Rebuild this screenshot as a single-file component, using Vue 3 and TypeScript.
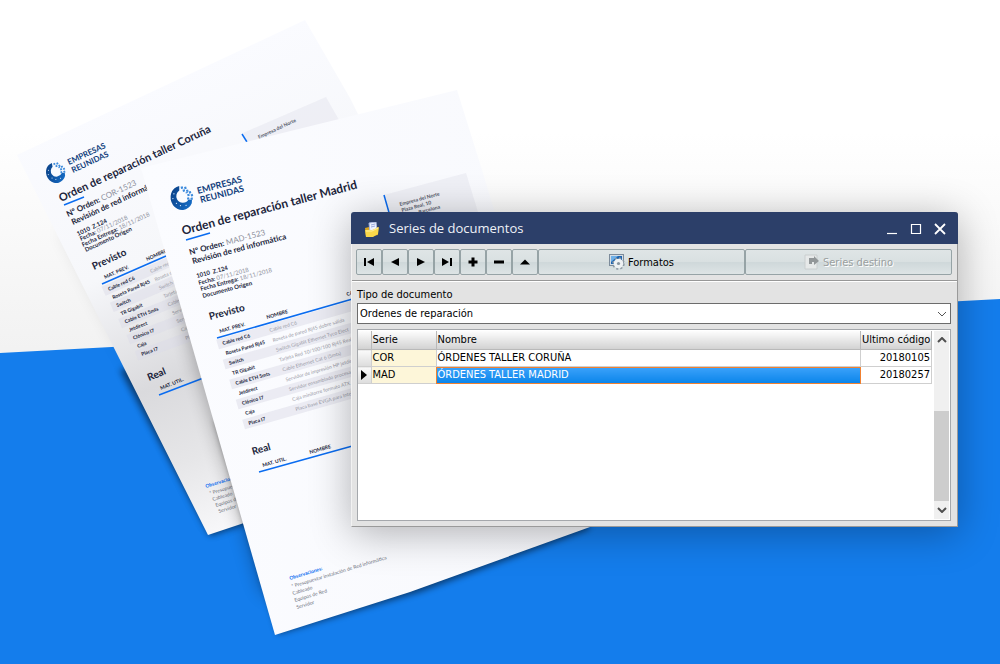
<script setup lang="ts">
import { ref } from 'vue'

interface Line { x: number; y: number; text: string; value?: string }
interface Item { name: string; detail: string }
interface Pt { x: number; y: number }
interface Sheet {
  key: string
  outline: string
  fill: string
  angle: number
  logo: Pt
  logoScale: number
  brandSize: number
  brand: Line[]
  title: Line
  titleSize: number
  rule: string
  leadSize: number
  lead: Line[]
  meta: Line[]
  address: { box: string; bar: string; lines: Line[] }
  planned: { heading: Line; columns: Line[]; rule: string; first: Pt; last: Pt; detailFirst: Pt; detailLast: Pt; angles: [number, number] }
  real: { angle: number; heading: Line; columns: Line[]; rule: string }
  notes: { angle: number; lines: Line[] }
}

const items: Item[] = [
  { name: 'Cable red C6', detail: 'Cable red C6' },
  { name: 'Roseta Pared Rj45', detail: 'Roseta de pared Rj45 dobre salida' },
  { name: 'Switch', detail: 'Switch Gigabit Ethernet Tyco Elect' },
  { name: 'TR Gigabit', detail: 'Tarjeta Red 10/100/100 Rj45 Realtek' },
  { name: 'Cable ETH 5mts', detail: 'Cable Ethernet Cat 6 (5mts)' },
  { name: 'Jetdirect', detail: 'Servidor de impresión HP jetdirect' },
  { name: 'Clónico I7', detail: 'Servidor ensamblado procesador' },
  { name: 'Caja', detail: 'Caja minitorre formato ATX' },
  { name: 'Placa I7', detail: 'Placa base EVGA para Intel' },
]

const sheets: Sheet[] = [
  {
    key: 'coruna',
    outline: '17,155 305,20 350,98 520,440 250,521 208,535',
    fill: 'url(#sheetBack)',
    angle: -25,
    logo: { x: 55, y: 172 },
    logoScale: 0.95,
    brandSize: 8,
    brand: [{ x: 69, y: 165, text: 'EMPRESAS' }, { x: 73, y: 173, text: 'REUNIDAS' }],
    title: { x: 61, y: 202, text: 'Orden de reparación taller Coruña' },
    titleSize: 11,
    rule: 'M64 205 L84 197',
    leadSize: 8,
    lead: [{ x: 68, y: 217, text: 'Nº Orden:', value: 'COR-1523' }, { x: 73, y: 225, text: 'Revisión de red informática' }],
    meta: [
      { x: 78, y: 236, text: '1010  Z.124' },
      { x: 81, y: 241, text: 'Fecha:', value: '07/11/2018' },
      { x: 83, y: 247, text: 'Fecha Entrega:', value: '18/11/2018' },
      { x: 86, y: 252, text: 'Documento Origen' },
    ],
    address: {
      box: '243,133 326,97 339,120 248,143',
      bar: 'M242 134 L247 142',
      lines: [{ x: 259, y: 139, text: 'Empresa del Norte' }],
    },
    planned: {
      heading: { x: 94, y: 270, text: 'Previsto' },
      columns: [{ x: 105, y: 279, text: 'MAT. PREV.' }, { x: 147, y: 261, text: 'NOMBRE' }],
      rule: 'M102 284 L166 256',
      first: { x: 109, y: 291 },
      last: { x: 142, y: 356 },
      detailFirst: { x: 151, y: 273 },
      detailLast: { x: 186, y: 340 },
      angles: [-24, -20],
    },
    real: {
      angle: -22,
      heading: { x: 149, y: 381, text: 'Real' },
      columns: [{ x: 161, y: 390, text: 'MAT. UTIL.' }],
      rule: 'M159 395 L206 377',
    },
    notes: {
      angle: -17,
      lines: [
        { x: 206, y: 488, text: 'Observaciones:' },
        { x: 210, y: 495, text: '* Presupuestar' },
        { x: 213, y: 501, text: 'Cableado' },
        { x: 216, y: 507, text: 'Equipos de Red' },
        { x: 219, y: 513, text: 'Servidor' },
      ],
    },
  },
  {
    key: 'madrid',
    outline: '141,168 457,90 482,170 590,527 410,592 275,635',
    fill: 'url(#sheetFront)',
    angle: -15,
    logo: { x: 181, y: 197 },
    logoScale: 1.1,
    brandSize: 9,
    brand: [{ x: 198, y: 194, text: 'EMPRESAS' }, { x: 201, y: 203, text: 'REUNIDAS' }],
    title: { x: 183, y: 235, text: 'Orden de reparación taller Madrid' },
    titleSize: 12,
    rule: 'M186 240 L210 233',
    leadSize: 8,
    lead: [{ x: 190, y: 255, text: 'Nº Orden:', value: 'MAD-1523' }, { x: 193, y: 264, text: 'Revisión de red informática' }],
    meta: [
      { x: 197, y: 278, text: '1010  Z.124' },
      { x: 199, y: 285, text: 'Fecha:', value: '07/11/2018' },
      { x: 201, y: 291, text: 'Fecha Entrega:', value: '18/11/2018' },
      { x: 203, y: 298, text: 'Documento Origen' },
    ],
    address: {
      box: '384,195 466,173 482,225 392,225',
      bar: 'M384 195 L390 216',
      lines: [
        { x: 400, y: 206, text: 'Empresa del Norte' },
        { x: 402, y: 212, text: 'Plaza Real, 10' },
        { x: 419, y: 214, text: 'Barcelona' },
      ],
    },
    planned: {
      heading: { x: 210, y: 320, text: 'Previsto' },
      columns: [{ x: 220, y: 333, text: 'MAT. PREV.' }, { x: 267, y: 319, text: 'NOMBRE' }, { x: 347, y: 296, text: 'CANT.' }],
      rule: 'M217 338 L356 298',
      first: { x: 223, y: 345 },
      last: { x: 249, y: 425 },
      detailFirst: { x: 270, y: 332 },
      detailLast: { x: 296, y: 411 },
      angles: [-16, -16],
    },
    real: {
      angle: -16,
      heading: { x: 253, y: 455, text: 'Real' },
      columns: [{ x: 263, y: 467, text: 'MAT. UTIL.' }, { x: 310, y: 454, text: 'NOMBRE' }],
      rule: 'M259 472 L356 445',
    },
    notes: {
      angle: -17,
      lines: [
        { x: 290, y: 580, text: 'Observaciones:' },
        { x: 292, y: 588, text: '* Presupuestar instalación de Red informática' },
        { x: 293, y: 595, text: 'Cableado' },
        { x: 295, y: 602, text: 'Equipos de Red' },
        { x: 297, y: 609, text: 'Servidor' },
      ],
    },
  },
]

const place = (p: Pt, angle: number): string => `translate(${p.x} ${p.y}) rotate(${angle})`

const between = (a: Pt, b: Pt, i: number): Pt => {
  const t = i / (items.length - 1)
  return { x: a.x + (b.x - a.x) * t, y: a.y + (b.y - a.y) * t }
}

const rowAngle = (range: [number, number], i: number): number =>
  range[0] + ((range[1] - range[0]) * i) / (items.length - 1)

const navigation = [
  { label: 'Primero', path: 'M2 3h2v8h-2z M12 3v8l-7-4z' },
  { label: 'Anterior', path: 'M11 3v8l-8-4z' },
  { label: 'Siguiente', path: 'M3 3v8l8-4z' },
  { label: 'Último', path: 'M10 3h2v8h-2z M2 3v8l7-4z' },
  { label: 'Añadir', path: 'M5.500 2.500h3v3h3v3h-3v3h-3v-3h-3v-3h3z' },
  { label: 'Eliminar', path: 'M2 5.500h10v3h-10z' },
  { label: 'Editar', path: 'M2 9.500h10l-5-5z' },
]

const docType = ref('Ordenes de reparación')
const selected = ref('MAD')
const series = [
  { code: 'COR', name: 'ÓRDENES TALLER CORUÑA', last: '20180105' },
  { code: 'MAD', name: 'ÓRDENES TALLER MADRID', last: '20180257' },
]
</script>

<template>
  <main class="stage">
    <svg class="scene" viewBox="0 0 1000 664" preserveAspectRatio="xMinYMin slice" role="img" aria-label="Órdenes de reparación impresas">
      <defs>
        <linearGradient id="wall" x1="0" y1="0" x2="0" y2="1">
          <stop offset="0.2" stop-color="#ffffff" />
          <stop offset="0.55" stop-color="#f1f1f1" />
        </linearGradient>
        <linearGradient id="sheetBack" gradientUnits="userSpaceOnUse" x1="140" y1="90" x2="320" y2="500">
          <stop offset="0" stop-color="#fafbff" />
          <stop offset="0.35" stop-color="#f6f7fa" />
          <stop offset="0.62" stop-color="#dadadd" />
          <stop offset="0.8" stop-color="#e6e6e8" />
          <stop offset="1" stop-color="#fafafc" />
        </linearGradient>
        <linearGradient id="sheetFront" x1="0" y1="0" x2="1" y2="0">
          <stop offset="0" stop-color="#fbfcff" />
          <stop offset="1" stop-color="#f8f9fd" />
        </linearGradient>
        <linearGradient id="brandBlue" x1="0" y1="0" x2="1" y2="1">
          <stop offset="0" stop-color="#0a3d80" />
          <stop offset="1" stop-color="#1670cc" />
        </linearGradient>
        <filter id="soft" x="-30%" y="-30%" width="160%" height="160%">
          <feGaussianBlur stdDeviation="9" />
        </filter>
        <filter id="tight" x="-30%" y="-30%" width="160%" height="160%">
          <feGaussianBlur stdDeviation="3" />
        </filter>
        <g id="brandMark">
          <path d="M1 -10 A10 11 0 1 0 8 8 L9 5 L6 4 A6 6 0 0 1 -4 1 A6 6 0 0 1 0 -6z" fill="url(#brandBlue)" />
          <path d="M-6 -5h1v1h-1z M-8 -1h1v1h-1z M-6 4h1v1h-1z M-3 7h1v1h-1z M2 8h1v1h-1z" fill="#d7e8fa" />
          <path d="M2 -9h2v2h-2z M5 -8h2v2h-2z M3 -6h2v2h-2z M6 -5h2v2h-2z M8 -3h2v2h-2z M5 -3h2v1h-2z M9 0h2v2h-2z M6 -1h2v2h-2z M8 3h2v2h-2z M5 2h2v2h-2z" fill="#3d8bdc" />
        </g>
      </defs>

      <rect width="1000" height="664" fill="url(#wall)" />
      <path d="M0 353 L1000 299 V664 H0z" fill="#147dec" />

      <template v-for="sheet in sheets" :key="sheet.key">
        <template v-if="sheet.key === 'madrid'">
          <polygon points="175,290 440,240 560,500 280,600 262,590" class="shade deep" filter="url(#soft)" />
          <polygon points="215,420 500,400 590,529 420,592 278,634" class="shade dark" filter="url(#tight)" />
        </template>
        <template v-else>
          <polygon points="60,230 300,200 400,420 214,530" class="shade faint" filter="url(#soft)" />
          <polygon points="120,370 300,320 300,505 210,536" class="shade dark" filter="url(#tight)" />
        </template>
        <polygon :points="sheet.outline" :fill="sheet.fill" />

        <polygon :points="sheet.address.box" class="band address" />
        <path :d="sheet.address.bar" class="rule" />
        <text v-for="l in sheet.address.lines" :key="l.text" class="cell soft" :transform="place(l, sheet.angle)">{{ l.text }}</text>

        <use href="#brandMark" :transform="`translate(${sheet.logo.x} ${sheet.logo.y}) rotate(${sheet.angle}) scale(${sheet.logoScale})`" />
        <text v-for="l in sheet.brand" :key="l.text" class="brand" :font-size="sheet.brandSize" :transform="place(l, sheet.angle)">{{ l.text }}</text>

        <text class="title" :font-size="sheet.titleSize" :transform="place(sheet.title, sheet.angle)">{{ sheet.title.text }}</text>
        <path :d="sheet.rule" class="rule" />
        <text v-for="l in sheet.lead" :key="l.text" class="lead" :font-size="sheet.leadSize" :transform="place(l, sheet.angle)">{{ l.text }}<tspan v-if="l.value" class="value">{{ ' ' + l.value }}</tspan></text>
        <text v-for="l in sheet.meta" :key="l.text" class="meta" :transform="place(l, sheet.angle)">{{ l.text }}<tspan v-if="l.value" class="value">{{ ' ' + l.value }}</tspan></text>

        <text class="heading" :transform="place(sheet.planned.heading, sheet.angle)">{{ sheet.planned.heading.text }}</text>
        <text v-for="l in sheet.planned.columns" :key="l.text" class="cell" :transform="place(l, sheet.planned.angles[0])">{{ l.text }}</text>
        <path :d="sheet.planned.rule" class="rule" />
        <g v-for="(item, i) in items" :key="item.name">
          <rect v-if="i % 2 === 0" x="-5" y="-7" width="150" height="10" class="band" :transform="place(between(sheet.planned.first, sheet.planned.last, i), rowAngle(sheet.planned.angles, i))" />
          <text class="cell" :transform="place(between(sheet.planned.first, sheet.planned.last, i), rowAngle(sheet.planned.angles, i))">{{ item.name }}</text>
          <text class="detail" :transform="place(between(sheet.planned.detailFirst, sheet.planned.detailLast, i), rowAngle(sheet.planned.angles, i))">{{ item.detail }}</text>
        </g>

        <text class="heading" :transform="place(sheet.real.heading, sheet.real.angle)">{{ sheet.real.heading.text }}</text>
        <text v-for="l in sheet.real.columns" :key="l.text" class="cell" :transform="place(l, sheet.real.angle)">{{ l.text }}</text>
        <path :d="sheet.real.rule" class="rule" />

        <text v-for="(l, i) in sheet.notes.lines" :key="l.text" :class="i === 0 ? 'note-head' : 'note'" :transform="place(l, sheet.notes.angle)">{{ l.text }}</text>
      </template>
    </svg>

    <section class="window" aria-labelledby="window-title">
      <header class="titlebar">
        <svg class="folder" viewBox="0 0 16 16" aria-hidden="true">
          <path d="M1 6l4-1 1 1 8-1v8l-12 2z" fill="#d9a520" />
          <path d="M5 1l7-1 1 9-7 2z" fill="#eef3ff" stroke="#aab6dc" />
          <path d="M7 3l4-1M7 5l4-1" stroke="#9aa8dd" fill="none" />
          <path d="M1 8l7 0 7-3-1 7-5 3-7 0z" fill="#fbd84a" />
          <path d="M2 9l6 0 6-3" stroke="#fff0a0" fill="none" />
        </svg>
        <h1 id="window-title">Series de documentos</h1>
        <button type="button" class="caption" aria-label="Minimizar"><svg viewBox="0 0 12 12"><path d="M1 10.500h10" /></svg></button>
        <button type="button" class="caption" aria-label="Maximizar"><svg viewBox="0 0 12 12"><path d="M1.500 1.500h9v9h-9z" /></svg></button>
        <button type="button" class="caption" aria-label="Cerrar"><svg viewBox="0 0 12 12"><path d="M1 1l10 10M11 1L1 11" stroke-width="1.800" /></svg></button>
      </header>

      <div class="toolbar">
        <button v-for="n in navigation" :key="n.label" type="button" class="tool" :aria-label="n.label">
          <svg viewBox="0 0 14 14"><path :d="n.path" /></svg>
        </button>
        <button type="button" class="tool wide">
          <svg class="glyph" viewBox="0 0 16 16" aria-hidden="true">
            <rect x="0.500" y="0.500" width="14" height="11" fill="#d5dde5" stroke="#7c8b9b" />
            <rect x="2" y="2" width="11" height="8" fill="#1d63ae" />
            <path d="M2 2h7l-7 6z" fill="#6fb0e8" />
            <circle cx="9.500" cy="9.500" r="5" fill="none" stroke="#8e99a3" stroke-dasharray="2 1.900" stroke-width="2.500" />
            <circle cx="9.500" cy="9.500" r="4.800" fill="#eef1f3" />
            <circle cx="9.500" cy="9.500" r="1.600" fill="#8895a1" />
          </svg>
          Formatos
        </button>
        <button type="button" class="tool wide" disabled>
          <svg class="glyph" viewBox="0 0 16 16" aria-hidden="true">
            <path d="M1 1h12v14h-12z" fill="#e6e9e9" stroke="#c9cecf" />
            <path d="M5 4h5v-2l5 5-5 4v-3h-2v2h-3z" fill="#929799" />
          </svg>
          Series destino
        </button>
      </div>

      <div class="body">
        <label for="doc-type">Tipo de documento</label>
        <div class="combo">
          <select id="doc-type" v-model="docType">
            <option>Ordenes de reparación</option>
          </select>
          <svg viewBox="0 0 10 6" aria-hidden="true"><path d="M1 1l4 4 4-4" /></svg>
        </div>

        <div class="grid">
          <div class="rows">
            <table>
              <colgroup><col class="c-mark" /><col class="c-code" /><col /><col class="c-last" /></colgroup>
              <thead>
                <tr><th aria-label="Selección"></th><th>Serie</th><th>Nombre</th><th class="num">Ultimo código</th></tr>
              </thead>
              <tbody>
                <tr v-for="s in series" :key="s.code" @click="selected = s.code">
                  <td class="mark"><svg v-if="s.code === selected" viewBox="0 0 6 10"><path d="M0 0v10l6-5z" /></svg></td>
                  <td class="code">{{ s.code }}</td>
                  <td :class="{ active: s.code === selected }">{{ s.name }}</td>
                  <td class="num">{{ s.last }}</td>
                </tr>
              </tbody>
            </table>
          </div>
          <div class="scroll">
            <button type="button" aria-label="Subir"><svg viewBox="0 0 10 6"><path d="M1 5l4-4 4 4" /></svg></button>
            <div class="track"><div class="thumb"></div></div>
            <button type="button" aria-label="Bajar"><svg viewBox="0 0 10 6"><path d="M1 1l4 4 4-4" /></svg></button>
          </div>
        </div>
      </div>
    </section>
  </main>
</template>

<style>
body { margin: 0; }
</style>

<style scoped>
.stage {
  position: relative;
  box-sizing: border-box;
  min-height: 100vh;
  padding: 212px 4.2% 24px 35.1%;
  overflow: hidden;
  background: #147dec;
}
.scene { position: absolute; inset: 0; width: 100%; height: 100%; font-family: Lato, "Open Sans", sans-serif; }
.scene text { white-space: pre; fill: #20243a; }
.shade { fill: #000; }
.shade.deep { opacity: 0.3; }
.shade.dark { opacity: 0.5; }
.shade.faint { opacity: 0.1; }
.band { fill: #dcdce8; fill-opacity: 0.5; }
.band.address { fill-opacity: 0.35; }
.rule { stroke: #0a6cf0; stroke-width: 1.5; fill: none; }
.scene .brand { fill: #123f7c; font-weight: 700; }
.title { font-weight: 700; }
.heading { font-size: 10px; font-weight: 700; }
.lead { font-weight: 700; }
.meta { font-size: 6px; font-weight: 700; }
.scene .value { fill: #8d909c; font-weight: 400; }
.cell { font-size: 5px; font-weight: 700; }
.scene .soft { fill: #555a6b; }
.scene .detail { font-size: 5px; fill: #9a9ca8; }
.scene .note-head { font-size: 5px; font-weight: 700; fill: #0a6cf0; }
.scene .note { font-size: 5px; fill: #70747f; }

.window {
  position: relative;
  box-sizing: border-box;
  border: 1px solid #9a9a9a;
  border-top: 0;
  border-left-color: #f2f2f2;
  border-radius: 3px 3px 0 0;
  background: #e3e3e3;
  box-shadow: 0 6px 40px rgba(0, 0, 0, 0.3);
  font-family: "DejaVu Sans Condensed", "DejaVu Sans", sans-serif;
  font-size: 11px;
  color: #000;
}
.titlebar {
  display: flex;
  align-items: center;
  height: 32px;
  margin: 0 -1px;
  padding: 0 12px;
  box-sizing: border-box;
  border-radius: 3px 3px 0 0;
  background: #2c3f69;
}
.folder { width: 16px; height: 16px; margin: 4px 9px 0 1px; }
h1 { flex: 1; margin: 0; font: 400 13px/20px "Open Sans", "Noto Sans", sans-serif; color: #eef1f7; }
.caption { width: 24px; height: 24px; padding: 0; border: 0; background: none; }
.caption:last-child { margin-right: -6px; }
.caption svg { display: block; width: 12px; height: 12px; margin: 2px auto 0; fill: none; stroke: #fff; stroke-width: 1.2; }

.toolbar {
  display: flex;
  box-sizing: border-box;
  height: 37px;
  padding: 5px 5px 5px 4px;
  border-bottom: 1px solid #979797;
  box-shadow: 0 1px #fff;
}
.tool {
  display: flex;
  flex: none;
  align-items: center;
  justify-content: center;
  gap: 3px;
  width: 26px;
  padding: 0;
  border: 1px solid #96a3a6;
  border-radius: 2px;
  background: linear-gradient(#dfe5e6, #d9e0e1 48%, #cfd8da 52%, #dde4e5);
  font: inherit;
  color: #000;
}
.tool.wide { flex: 1; width: auto; }
.tool svg { width: 14px; height: 14px; }
.tool .glyph { width: 16px; height: 16px; }
.tool:disabled { color: #9a9f9f; text-shadow: 1px 1px #fff; }

.body { padding: 6px 6px 5px 5px; }
label { display: block; height: 16px; line-height: 16px; }
.combo { position: relative; height: 21px; }
select {
  box-sizing: border-box;
  width: 100%;
  height: 21px;
  padding: 0 2px;
  border: 1px solid #6c6c6c;
  border-radius: 0;
  appearance: none;
  background: #fff;
  font: inherit;
  color: #000;
}
.combo svg { position: absolute; right: 4px; top: 8px; width: 10px; height: 6px; fill: none; stroke: #555; pointer-events: none; }

.grid {
  display: flex;
  box-sizing: border-box;
  min-height: 192px;
  margin-top: 5px;
  border: 1px solid #a5a8ac;
  background: #fff;
}
.rows { flex: 1; padding-top: 1px; }
table { width: 100%; border-collapse: collapse; table-layout: fixed; }
.c-mark { width: 13px; }
.c-code { width: 65px; }
.c-last { width: 71px; }
th, td { height: 16px; padding: 0 1px; border: 1px solid #cfcfcf; border-width: 0 1px 1px 0; font-weight: 400; line-height: 16px; text-align: left; white-space: nowrap; }
th { height: 18px; border-color: #b9b9b9; background: linear-gradient(#fdfdfd, #d2d2d2); }
.num { text-align: right; }
td.code { background: #fdf6d9; }
td.mark { padding: 0 3px; background: linear-gradient(#fafafa, #dcdcdc); }
td.mark svg { display: block; width: 6px; height: 10px; }
td.active { outline: 1px solid #f08030; outline-offset: -1px; background: linear-gradient(#3ba2fa, #0a84ea); color: #fff; }
.scroll { display: flex; flex-direction: column; width: 15px; margin: 1px 1px 1px 2px; background: #f0f0f0; }
.scroll button { height: 18px; padding: 0; border: 0; background: none; }
.scroll svg { display: block; width: 10px; height: 6px; margin: auto; fill: none; stroke: #505050; stroke-width: 2; }
.track { display: flex; flex: 1; align-items: flex-end; }
.thumb { width: 100%; height: 59%; background: #cdcdcd; }
</style>
